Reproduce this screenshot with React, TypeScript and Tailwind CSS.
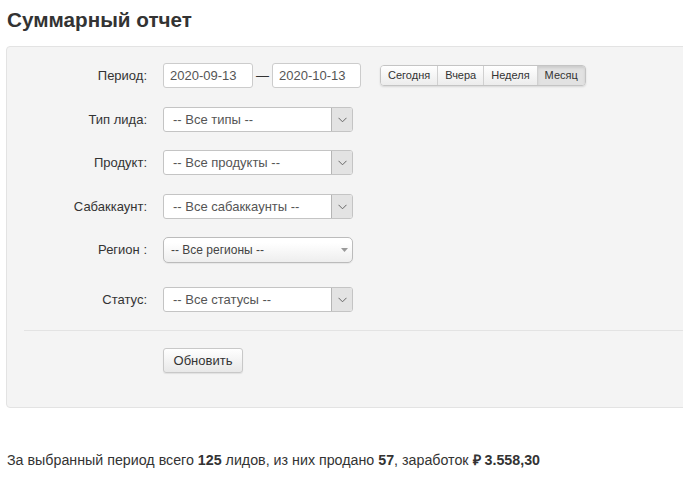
import React from "react";

const font = { fontFamily: '"Liberation Sans", Arial, sans-serif' };

const Chevron = () => (
  <svg width="9" height="6" viewBox="0 0 9 6" fill="none">
    <path d="M0.5 0.8 L4.5 4.8 L8.5 0.8" stroke="#666" strokeWidth="1" />
  </svg>
);

const Select = ({ text }: { text: string }) => (
  <div className="flex w-[190px] h-[25px] bg-white border border-[#c4c4c4] rounded-[3px] overflow-hidden">
    <div className="flex-1 flex items-center pl-[9px] text-[13px] text-[#555]">{text}</div>
    <div className="w-[21px] flex items-center justify-center bg-[#e3e3e3] border-l border-[#b5b5b5]">
      <Chevron />
    </div>
  </div>
);

const Row = ({ label, h, children }: { label: string; h: string; children: React.ReactNode }) => (
  <div className={`flex items-start ${h}`}>
    <div className="w-[140px] h-[25px] flex items-center justify-end text-[13px] text-[#333]">{label}</div>
    <div className="ml-[16px] flex items-center">{children}</div>
  </div>
);

const App = () => {
  const periods = ["Сегодня", "Вчера", "Неделя", "Месяц"];
  return (
    <div className="w-[683px] h-[485px] bg-white overflow-hidden" style={font}>
      <h1 className="pt-[9px] h-[30px] mb-[16px] pl-[7px] text-[20.7px] leading-[22px] font-bold text-[#333]">
        Суммарный отчет
      </h1>
      <div className="ml-[6px] w-[700px] bg-[#f4f4f4] border border-[#e3e3e3] rounded-[4px] pt-[16px] pb-[34px]">
        <Row label="Период:" h="h-[44px]">
          <input
            readOnly
            value="2020-09-13"
            className="w-[90px] h-[25px] px-[6px] bg-white border border-[#ccc] rounded-[3px] text-[13px] text-[#555] outline-none"
          />
          <span className="w-[19px] text-center text-[13px] text-[#333]">—</span>
          <input
            readOnly
            value="2020-10-13"
            className="w-[89px] h-[25px] px-[6px] bg-white border border-[#ccc] rounded-[3px] text-[13px] text-[#555] outline-none"
          />
          <div className="ml-[19px] flex h-[21px] rounded-[4px] border border-[#c4c4c4] shadow-[0_1px_2px_rgba(0,0,0,0.12)] overflow-hidden">
            {periods.map((p, i) => (
              <button
                key={p}
                className={
                  "px-[7px] text-[11px] text-[#333] " +
                  (i > 0 ? "border-l border-[#d0d0d0] " : "") +
                  (i === 3
                    ? "bg-[#e2e2e2] shadow-[inset_0_2px_3px_rgba(0,0,0,0.1)]"
                    : "bg-gradient-to-b from-white to-[#ececec]")
                }
              >
                {p}
              </button>
            ))}
          </div>
        </Row>
        <Row label="Тип лида:" h="h-[43px]">
          <Select text="-- Все типы --" />
        </Row>
        <Row label="Продукт:" h="h-[44px]">
          <Select text="-- Все продукты --" />
        </Row>
        <Row label="Сабаккаунт:" h="h-[43px]">
          <Select text="-- Все сабаккаунты --" />
        </Row>
        <Row label="Регион :" h="h-[50px]">
          <div className="w-[190px] h-[26px] flex items-center justify-between pl-[7px] pr-[4px] border border-[#bbb] rounded-[5px] bg-gradient-to-b from-white from-20% to-[#eee] shadow-[0_1px_1px_rgba(0,0,0,0.06)] text-[12px] text-[#444]">
            <span>-- Все регионы --</span>
            <svg width="7" height="4" viewBox="0 0 7 4">
              <path d="M0 0 H7 L3.5 4 Z" fill="#999" />
            </svg>
          </div>
        </Row>
        <Row label="Статус:" h="h-[25px]">
          <Select text="-- Все статусы --" />
        </Row>
        <div className="ml-[17px] mt-[18px] border-t border-[#e3e3e3]" />
        <div className="pl-[156px] mt-[17px]">
          <button className="w-[80px] h-[25px] border border-[#c8c8c8] rounded-[3px] bg-gradient-to-b from-white to-[#e8e8e8] shadow-[0_1px_1px_rgba(0,0,0,0.08)] text-[13px] text-[#333]">
            Обновить
          </button>
        </div>
      </div>
      <p className="mt-[42px] pl-[7px] text-[14.25px] leading-[20px] text-[#333]">
        За выбранный период всего <b>125</b> лидов, из них продано <b>57</b>, заработок <b>₽ 3.558,30</b>
      </p>
    </div>
  );
};

export default App;
